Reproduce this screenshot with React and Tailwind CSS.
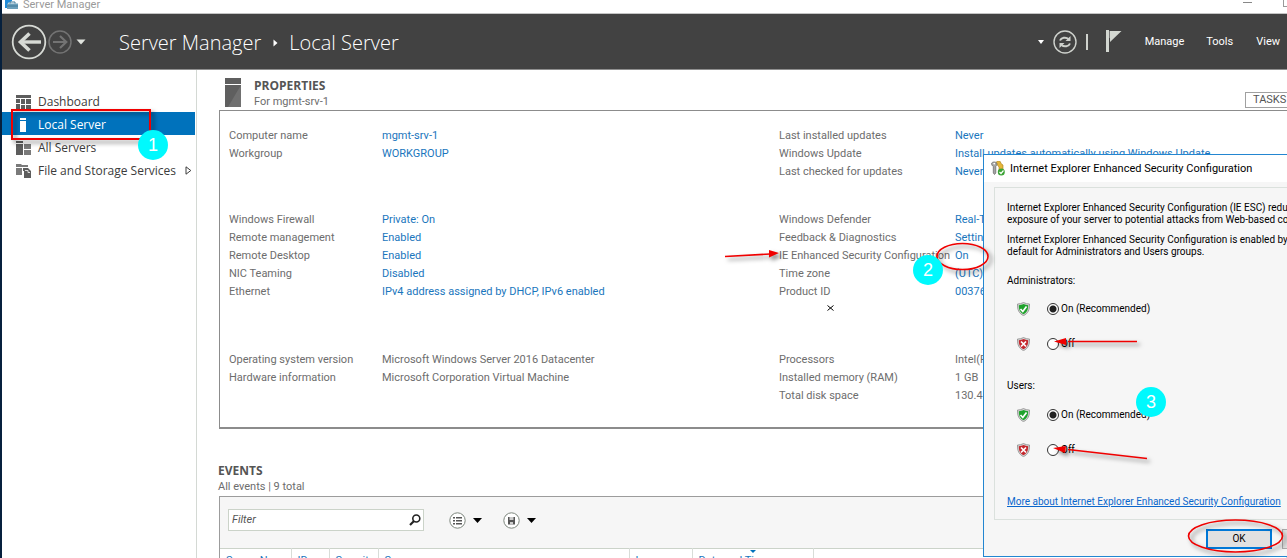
import React from "react";

const leftGroups = [
  [
    ["Computer name", "mgmt-srv-1", true],
    ["Workgroup", "WORKGROUP", true],
  ],
  [
    ["Windows Firewall", "Private: On", true],
    ["Remote management", "Enabled", true],
    ["Remote Desktop", "Enabled", true],
    ["NIC Teaming", "Disabled", true],
    ["Ethernet", "IPv4 address assigned by DHCP, IPv6 enabled", true],
  ],
  [
    ["Operating system version", "Microsoft Windows Server 2016 Datacenter", false],
    ["Hardware information", "Microsoft Corporation Virtual Machine", false],
  ],
];

const rightGroups = [
  [
    ["Last installed updates", "Never", true],
    ["Windows Update", "Install updates automatically using Windows Update", true],
    ["Last checked for updates", "Never", true],
  ],
  [
    ["Windows Defender", "Real-Time", true],
    ["Feedback & Diagnostics", "Settings", true],
    ["IE Enhanced Security Configuration", "On", true],
    ["Time zone", "(UTC)", true],
    ["Product ID", "00376", true],
  ],
  [
    ["Processors", "Intel(R)", false],
    ["Installed memory (RAM)", "1 GB", false],
    ["Total disk space", "130.45", false],
  ],
];

function PropertyGroup({ rows, labelClass }) {
  return (
    <dl>
      {rows.map(([label, value, linked]) => (
        <div key={label} className="flex h-[18px] items-center whitespace-nowrap leading-[18px]">
          <dt className={labelClass + " shrink-0 text-[#6d6d6d]"}>{label}</dt>
          <dd className="text-[#6d6d6d]">
            {linked ? <a href="#" className="text-[#1a76bd]">{value}</a> : value}
          </dd>
        </div>
      ))}
    </dl>
  );
}

function DashboardIcon() {
  return (
    <svg width="15" height="14" viewBox="0 0 15 14" fill="#5d5d5d">
      <path d="M0 0h15v3H0zM0 4h4v4H0zM0 9h4v5H0zM5 4h4v5H5zM5 10h4v4H5zM10 4h5v5h-5zM10 10h5v4h-5z" />
    </svg>
  );
}

function ServerIcon() {
  return (
    <svg width="15" height="14" viewBox="0 0 15 14" fill="#fff">
      <path d="M4 0h6v2H4zM4 3h6v11H4z" />
    </svg>
  );
}

function ServersIcon() {
  return (
    <svg width="15" height="14" viewBox="0 0 15 14">
      <path d="M0 0h7v2H0zM0 3h7v11H0z" fill="#5d5d5d" />
      <path d="M8 3h7v5H8zM8 9h7v5H8z" fill="#7a7a7a" />
    </svg>
  );
}

function StorageIcon() {
  return (
    <svg width="16" height="14" viewBox="0 0 16 14">
      <path d="M0 0h5l1 1h6v2H0zM0 4h6v7H0z" fill="#7a7a7a" />
      <path d="M7 4h5l3 3v7H8V7H7z" fill="#5d5d5d" />
      <path d="M9 6.500h3v2h2" fill="none" stroke="#ddd" />
    </svg>
  );
}

const navItems = [
  { name: "Dashboard", Icon: DashboardIcon },
  { name: "Local Server", Icon: ServerIcon, active: true },
  { name: "All Servers", Icon: ServersIcon },
  { name: "File and Storage Services", Icon: StorageIcon, expandable: true },
];

function Shield({ ok }) {
  return (
    <svg width="13" height="14" viewBox="0 0 13 14" className="shrink-0">
      <path d="M6.500 .5C8.500 1.500 10.500 2 12.500 2C12.700 8 11 11.500 6.500 13.600C2 11.500 .3 8 .5 2C2.500 2 4.500 1.500 6.500 .5Z" fill="#d5d5d5" stroke="#8d8d8d" strokeWidth=".8" />
      <path d="M6.500 2C8 2.800 9.500 3.100 11.200 3.200C11.200 7.500 10 10.500 6.500 12.300C3 10.500 1.800 7.500 1.800 3.200C3.500 3.100 5 2.800 6.500 2Z" fill={ok ? "#1fa32c" : "#c4262c"} />
      {ok ? (
        <path d="M3.500 7l2.300 2.500L9.500 4.500" fill="none" stroke="#fff" strokeWidth="1.700" />
      ) : (
        <path d="M4 4.500l5 5M9 4.500l-5 5" fill="none" stroke="#fff" strokeWidth="1.700" />
      )}
    </svg>
  );
}

function RadioRow({ group, label, ok, checked, className }) {
  return (
    <div className={className + " flex h-4 items-center pl-[10px]"}>
      <Shield ok={ok} />
      <label className="ml-[17px] flex items-center gap-[2px]">
        <input
          type="radio"
          name={group}
          defaultChecked={checked}
          className="size-3 appearance-none rounded-full border border-[#333] bg-white checked:bg-[radial-gradient(circle,#222_3px,#fff_4px)]"
        />
        {label}
      </label>
    </div>
  );
}

function SecurityDialog() {
  return (
    <section
      role="dialog"
      aria-label="Internet Explorer Enhanced Security Configuration"
      className="absolute left-[983px] top-[154px] w-[400px] border border-[#2386d1] bg-[#f6f6f6] font-[Roboto,sans-serif] text-[10px] leading-[12px] text-black"
    >
      <header className="flex h-[27px] items-center gap-[5px] bg-white pl-[7px] text-[11px]">
        <svg width="14" height="15" viewBox="0 0 14 15">
          <path d="M5 2.500a2.500 2.500 0 0 1 5 0L12 4v6l-2 2-2-1V6z" fill="#e5b63b" stroke="#a97c17" strokeWidth=".6" />
          <path d="M.5 2.500C1 .5 5.500 .3 6 2.800C6 4.500 5 5 4.800 5.500V12L3.500 13.500L2.300 12V5.500C1.500 5 .5 4 .5 2.500Z" fill="#a5a5a5" stroke="#666" strokeWidth=".7" />
          <circle cx="3.200" cy="2.600" r=".9" fill="#fff" />
          <circle cx="10.300" cy="11" r="3.500" fill="#3ba336" />
          <path d="M8.500 11l1.500 1.500 2.500-3" fill="none" stroke="#fff" strokeWidth="1.200" />
        </svg>
        <h2>Internet Explorer Enhanced Security Configuration</h2>
      </header>
      <div className="mx-[10px] mt-[5px] whitespace-nowrap border border-[#dbe1dd] px-3 pb-[11px] pt-[14px]">
        <p>
          Internet Explorer Enhanced Security Configuration (IE ESC) reduces the
          <br />
          exposure of your server to potential attacks from Web-based content.
        </p>
        <p className="mt-2">
          Internet Explorer Enhanced Security Configuration is enabled by
          <br />
          default for Administrators and Users groups.
        </p>
        <fieldset>
          <legend className="pt-[17px]">Administrators:</legend>
          <RadioRow group="administrators" label="On (Recommended)" ok checked className="mt-[14px]" />
          <RadioRow group="administrators" label="Off" className="mt-[19px]" />
        </fieldset>
        <fieldset>
          <legend className="pt-7">Users:</legend>
          <RadioRow group="users" label="On (Recommended)" ok checked className="mt-[15px]" />
          <RadioRow group="users" label="Off" className="mt-[19px]" />
        </fieldset>
        <a href="#" className="mt-[38px] block text-[#0a66cc] underline">
          More about Internet Explorer Enhanced Security Configuration
        </a>
      </div>
      <footer className="flex gap-[10px] pb-[7px] pl-[222px] pt-[9px]">
        <button type="button" className="h-5 w-[66px] border-2 border-[#0078d7] bg-[#e1e1e1]">OK</button>
        <button type="button" className="h-5 w-[66px] border border-[#adadad] bg-[#e1e1e1]">Cancel</button>
      </footer>
    </section>
  );
}

function Callout({ n, className }) {
  return (
    <span
      className={
        className +
        " absolute flex size-[30px] items-center justify-center rounded-full bg-[#00f9fd] font-['Liberation_Sans',sans-serif] text-[18px] leading-none text-white"
      }
    >
      {n}
    </span>
  );
}

function Annotations() {
  return (
    <div className="pointer-events-none absolute inset-0">
      <svg width="1287" height="558" viewBox="0 0 1287 558" fill="none" stroke="#f00000" strokeWidth="2" className="absolute left-0 top-0 [filter:drop-shadow(3px_3px_2px_rgba(0,0,0,.5))]">
        <rect x="12" y="110" width="138" height="29" />
        <ellipse cx="962.500" cy="256.500" rx="25.500" ry="13" strokeWidth="1.600" />
        <ellipse cx="1235.500" cy="536" rx="47" ry="16" strokeWidth="1.600" />
        <path d="M725 256.500L770 254M1068 341.500H1137M1068 449.500L1147 458.500" strokeWidth="1.600" />
        <path d="M779 253L769 250v7.500zM1054 341.500l12-3.500v7zM1053 448l13-2-1 7z" fill="#f00000" stroke="none" />
      </svg>
      <svg width="7" height="6" viewBox="0 0 7 6" className="absolute left-[827px] top-[305px]">
        <path d="M.5 .5l6 5M6.500 .5l-6 5" stroke="#000" />
      </svg>
      <Callout n="1" className="left-[138px] top-[130px]" />
      <Callout n="2" className="left-[913px] top-[255px]" />
      <Callout n="3" className="left-[1136px] top-[387px]" />
    </div>
  );
}

function TopBar() {
  return (
    <header className="flex h-[57px] shrink-0 items-center border-y border-t-[#c4c4c4] border-b-[#8f8f8f] bg-[#424242] text-white">
      <button type="button" aria-label="Back" className="ml-[9px]">
        <svg width="36" height="36" viewBox="0 0 36 36" fill="none" stroke="#d7dad5">
          <circle cx="18" cy="18" r="16.300" strokeWidth="1.800" />
          <path d="M9 18h21" strokeWidth="3.400" />
          <path d="M18.500 9.500L9.500 18l9 8.500" strokeWidth="3.600" />
        </svg>
      </button>
      <button type="button" aria-label="Forward" className="ml-px">
        <svg width="24" height="24" viewBox="0 0 24 24" fill="none" stroke="#737373">
          <circle cx="12" cy="12" r="11" strokeWidth="1.500" />
          <path d="M5 12h13M12 6l6.300 6-6.300 6" strokeWidth="2.200" />
        </svg>
      </button>
      <button type="button" aria-label="History" className="ml-1">
        <svg width="10" height="6" viewBox="0 0 10 6"><path d="M.5 .5h9L5 5.500z" fill="#e0e3de" /></svg>
      </button>
      <nav className="ml-[33px] flex items-center whitespace-nowrap pt-[2px] font-['Open_Sans',sans-serif] text-[20px] font-light leading-[28px]">
        <span>Server Manager</span>
        <svg width="5" height="8" viewBox="0 0 5 8" className="ml-3 mr-[11px]"><path d="M.5 .5L4.500 4l-4 3.500z" fill="#fff" /></svg>
        <h1>Local Server</h1>
      </nav>
      <div className="ml-auto flex shrink-0 items-center pr-[7px] text-[11px]">
        <button type="button" aria-label="Refresh options">
          <svg width="6" height="4" viewBox="0 0 6 4"><path d="M0 0h6L3 4z" fill="#fff" /></svg>
        </button>
        <button type="button" aria-label="Refresh" className="ml-[9px]">
          <svg width="24" height="24" viewBox="0 0 24 24" fill="none" stroke="#cfd2cd">
            <circle cx="12" cy="12" r="11" strokeWidth="1.400" />
            <path d="M7 10.500a5 4 0 0 1 8.500-1.500M17 13.500a5 4 0 0 1-8.500 1.500" strokeWidth="2" />
            <path d="M17.500 6v5h-5zM6.500 18v-5h5z" fill="#cfd2cd" stroke="none" />
          </svg>
        </button>
        <span className="ml-[9px] h-4 w-[2px] bg-[#cfd2cd]" />
        <button type="button" aria-label="Notifications" className="ml-[18px]">
          <svg width="16" height="24" viewBox="0 0 16 24" fill="#d3d7d1">
            <path d="M0 0h3v22H0zM4 1h11.500L4 12z" />
            <path d="M3.500 1v7" stroke="#777" strokeWidth="1" />
          </svg>
        </button>
        <button type="button" className="ml-[23px] pt-[2px]">Manage</button>
        <button type="button" className="ml-[22px] pt-[2px]">Tools</button>
        <button type="button" className="ml-[23px] pt-[2px]">View</button>
      </div>
    </header>
  );
}

function Caret() {
  return <svg width="9" height="5" viewBox="0 0 9 5"><path d="M0 0h9L4.500 5z" /></svg>;
}

const columns = [
  ["Server Name", "w-[71px]"],
  ["ID", "w-[38px]"],
  ["Severity", "w-[49px]"],
  ["Source", "w-[251px]"],
  ["Log", "w-[63px]"],
  ["Date and Time", "w-[121px]"],
  ["", ""],
];

export default function App() {
  return (
    <div className="relative flex h-screen w-full flex-col overflow-hidden border-l-2 border-[#06203d] bg-white font-[Roboto,'Noto_Sans',sans-serif] text-[11px] text-[#6d6d6d]">
      <div className="flex h-[13px] shrink-0 items-end bg-white">
        <svg width="13" height="10" viewBox="0 0 13 10" className="ml-[3px] mb-[4px] shrink-0">
          <path d="M0 0h7v2L3 4v5H0z" fill="#1f8ad8" />
          <path d="M2 4.500h11V10H2z" fill="#6c9fbb" />
          <path d="M5 4.500V3h5v1.500M2 7h11" fill="none" stroke="#3f7897" />
        </svg>
        <span className="ml-[5px] pb-px leading-[15px] text-[#9a9a9a]">Server Manager</span>
        <button type="button" aria-label="Minimize" className="ml-auto mb-[10px] h-px w-[9px] bg-[#888]" />
        <button type="button" aria-label="Maximize" className="-mr-[6px] mb-[6px] ml-[31px] h-[10px] w-[10px] shrink-0 border border-[#999]" />
      </div>
      <TopBar />
      <div className="flex min-h-0 flex-1">
        <nav className="w-[195px] shrink-0 border-r border-[#d4d9d4] pt-[19px] font-['Open_Sans',sans-serif] text-[12px] text-[#3c3c3c]">
          {navItems.map(({ name, Icon, active, expandable }) => (
            <a
              key={name}
              href="#"
              className={
                (active ? "bg-[#0072bc] text-white" : "") +
                " mr-px flex h-[23px] items-center whitespace-nowrap pl-[14px] pr-[3px] pt-[2px]"
              }
            >
              <span className="w-[22px] shrink-0"><Icon /></span>
              {name}
              {expandable && (
                <svg width="7" height="9" viewBox="0 0 7 9" className="ml-auto">
                  <path d="M1 .8L5.800 4.500L1 8.200z" fill="none" stroke="#3c3c3c" />
                </svg>
              )}
            </a>
          ))}
        </nav>
        <main className="min-w-0 flex-1 overflow-hidden pl-[21px]">
          <section>
            <header className="flex h-10 items-start">
              <svg width="16" height="29" viewBox="0 0 16 29" className="ml-[7px] mt-2 shrink-0">
                <path d="M0 0h16v6H0zM0 7h16v22H0z" fill="#5f5f5f" />
                <path d="M16 7v22H3z" fill="#707070" />
              </svg>
              <div className="ml-[13px] mt-2">
                <h2 className="font-['Open_Sans',sans-serif] text-[12px] font-bold leading-[16px] text-[#555]">PROPERTIES</h2>
                <p className="leading-[16px]">For mgmt-srv-1</p>
              </div>
              <button type="button" className="-mr-[20px] ml-auto mt-[22px] h-4 w-[62px] shrink-0 border border-[#a0a0a0] pl-[7px] text-left leading-[14px] text-[#555]">TASKS</button>
            </header>
            <div className="ml-px grid grid-cols-[550px_1fr] border border-r-0 border-[#8c8c8c] border-b-2 pb-[22px] pl-[9px] pt-[16px]">
              <div className="flex flex-col">
                <div className="min-h-[54px]"><PropertyGroup rows={leftGroups[0]} labelClass="w-[153px]" /></div>
                <div className="mt-[30px]"><PropertyGroup rows={leftGroups[1]} labelClass="w-[153px]" /></div>
                <div className="mt-[50px]"><PropertyGroup rows={leftGroups[2]} labelClass="w-[153px]" /></div>
              </div>
              <div className="flex flex-col">
                <PropertyGroup rows={rightGroups[0]} labelClass="w-[176px]" />
                <div className="mt-[30px]"><PropertyGroup rows={rightGroups[1]} labelClass="w-[176px]" /></div>
                <div className="mt-[50px]"><PropertyGroup rows={rightGroups[2]} labelClass="w-[176px]" /></div>
              </div>
            </div>
          </section>
          <section className="mt-[34px]">
            <h2 className="font-['Open_Sans',sans-serif] text-[12px] font-bold leading-[16px] text-[#555]">EVENTS</h2>
            <p className="leading-[16px]">All events | 9 total</p>
            <div className="ml-px mt-px border border-r-0 border-[#9c9c9c]">
              <div className="flex h-[51px] items-start bg-[#f6f6f6] pl-2 pt-3">
                <label className="flex h-[22px] w-[196px] items-center border border-[#cbd3c9] bg-white pr-[2px]">
                  <input type="text" aria-label="Filter" placeholder="Filter" className="min-w-0 flex-1 bg-transparent pl-[3px] pt-px italic outline-none placeholder:text-[#555]" />
                  <svg width="12" height="12" viewBox="0 0 12 12" fill="none" stroke="#222">
                    <circle cx="7.300" cy="4.500" r="3.500" strokeWidth="1.600" />
                    <path d="M5 7L1 11" strokeWidth="2.200" />
                  </svg>
                </label>
                <button type="button" aria-label="Saved queries" className="ml-[25px] mt-[3px] flex items-center gap-[7px]">
                  <svg width="17" height="17" viewBox="0 0 17 17">
                    <circle cx="8.500" cy="8.500" r="7.700" fill="#fff" stroke="#7c857c" />
                    <path d="M4 5h2v1.500H4zM7 5h6v1.500H7zM4 8h2v1.500H4zM7 8h6v1.500H7zM4 11h2v1.500H4zM7 11h6v1.500H7z" fill="#555" />
                  </svg>
                  <Caret />
                </button>
                <button type="button" aria-label="Save query" className="ml-[21px] mt-[3px] flex items-center gap-[7px]">
                  <svg width="17" height="17" viewBox="0 0 17 17">
                    <circle cx="8.500" cy="8.500" r="7.700" fill="#fff" stroke="#7c857c" />
                    <path d="M5 5h7v7.500H5z" fill="#555" />
                    <path d="M6.500 5h4v3h-4zM7 10h3v2.500H7z" fill="#ccc" />
                  </svg>
                  <Caret />
                </button>
              </div>
              <table className="w-full table-fixed border-collapse border-t border-[#cbd3c9]">
                <thead>
                  <tr className="h-6">
                    {columns.map(([title, width], i) => (
                      <th key={i} scope="col" className={width + " border-r border-[#d8ddd8] p-0 pl-[6px] text-left font-normal text-[#1a76bd]"}>
                        <span className="relative block whitespace-nowrap">
                          {title}
                          {title === "Date and Time" && (
                            <svg width="6" height="3" viewBox="0 0 6 3" className="absolute -top-[3px] left-[51px]">
                              <path d="M0 0h6L3 3z" fill="#0072bc" />
                            </svg>
                          )}
                        </span>
                      </th>
                    ))}
                  </tr>
                </thead>
              </table>
            </div>
          </section>
        </main>
      </div>
      <div className="absolute inset-y-0 -left-[2px] right-0">
        <SecurityDialog />
        <Annotations />
      </div>
    </div>
  );
}
